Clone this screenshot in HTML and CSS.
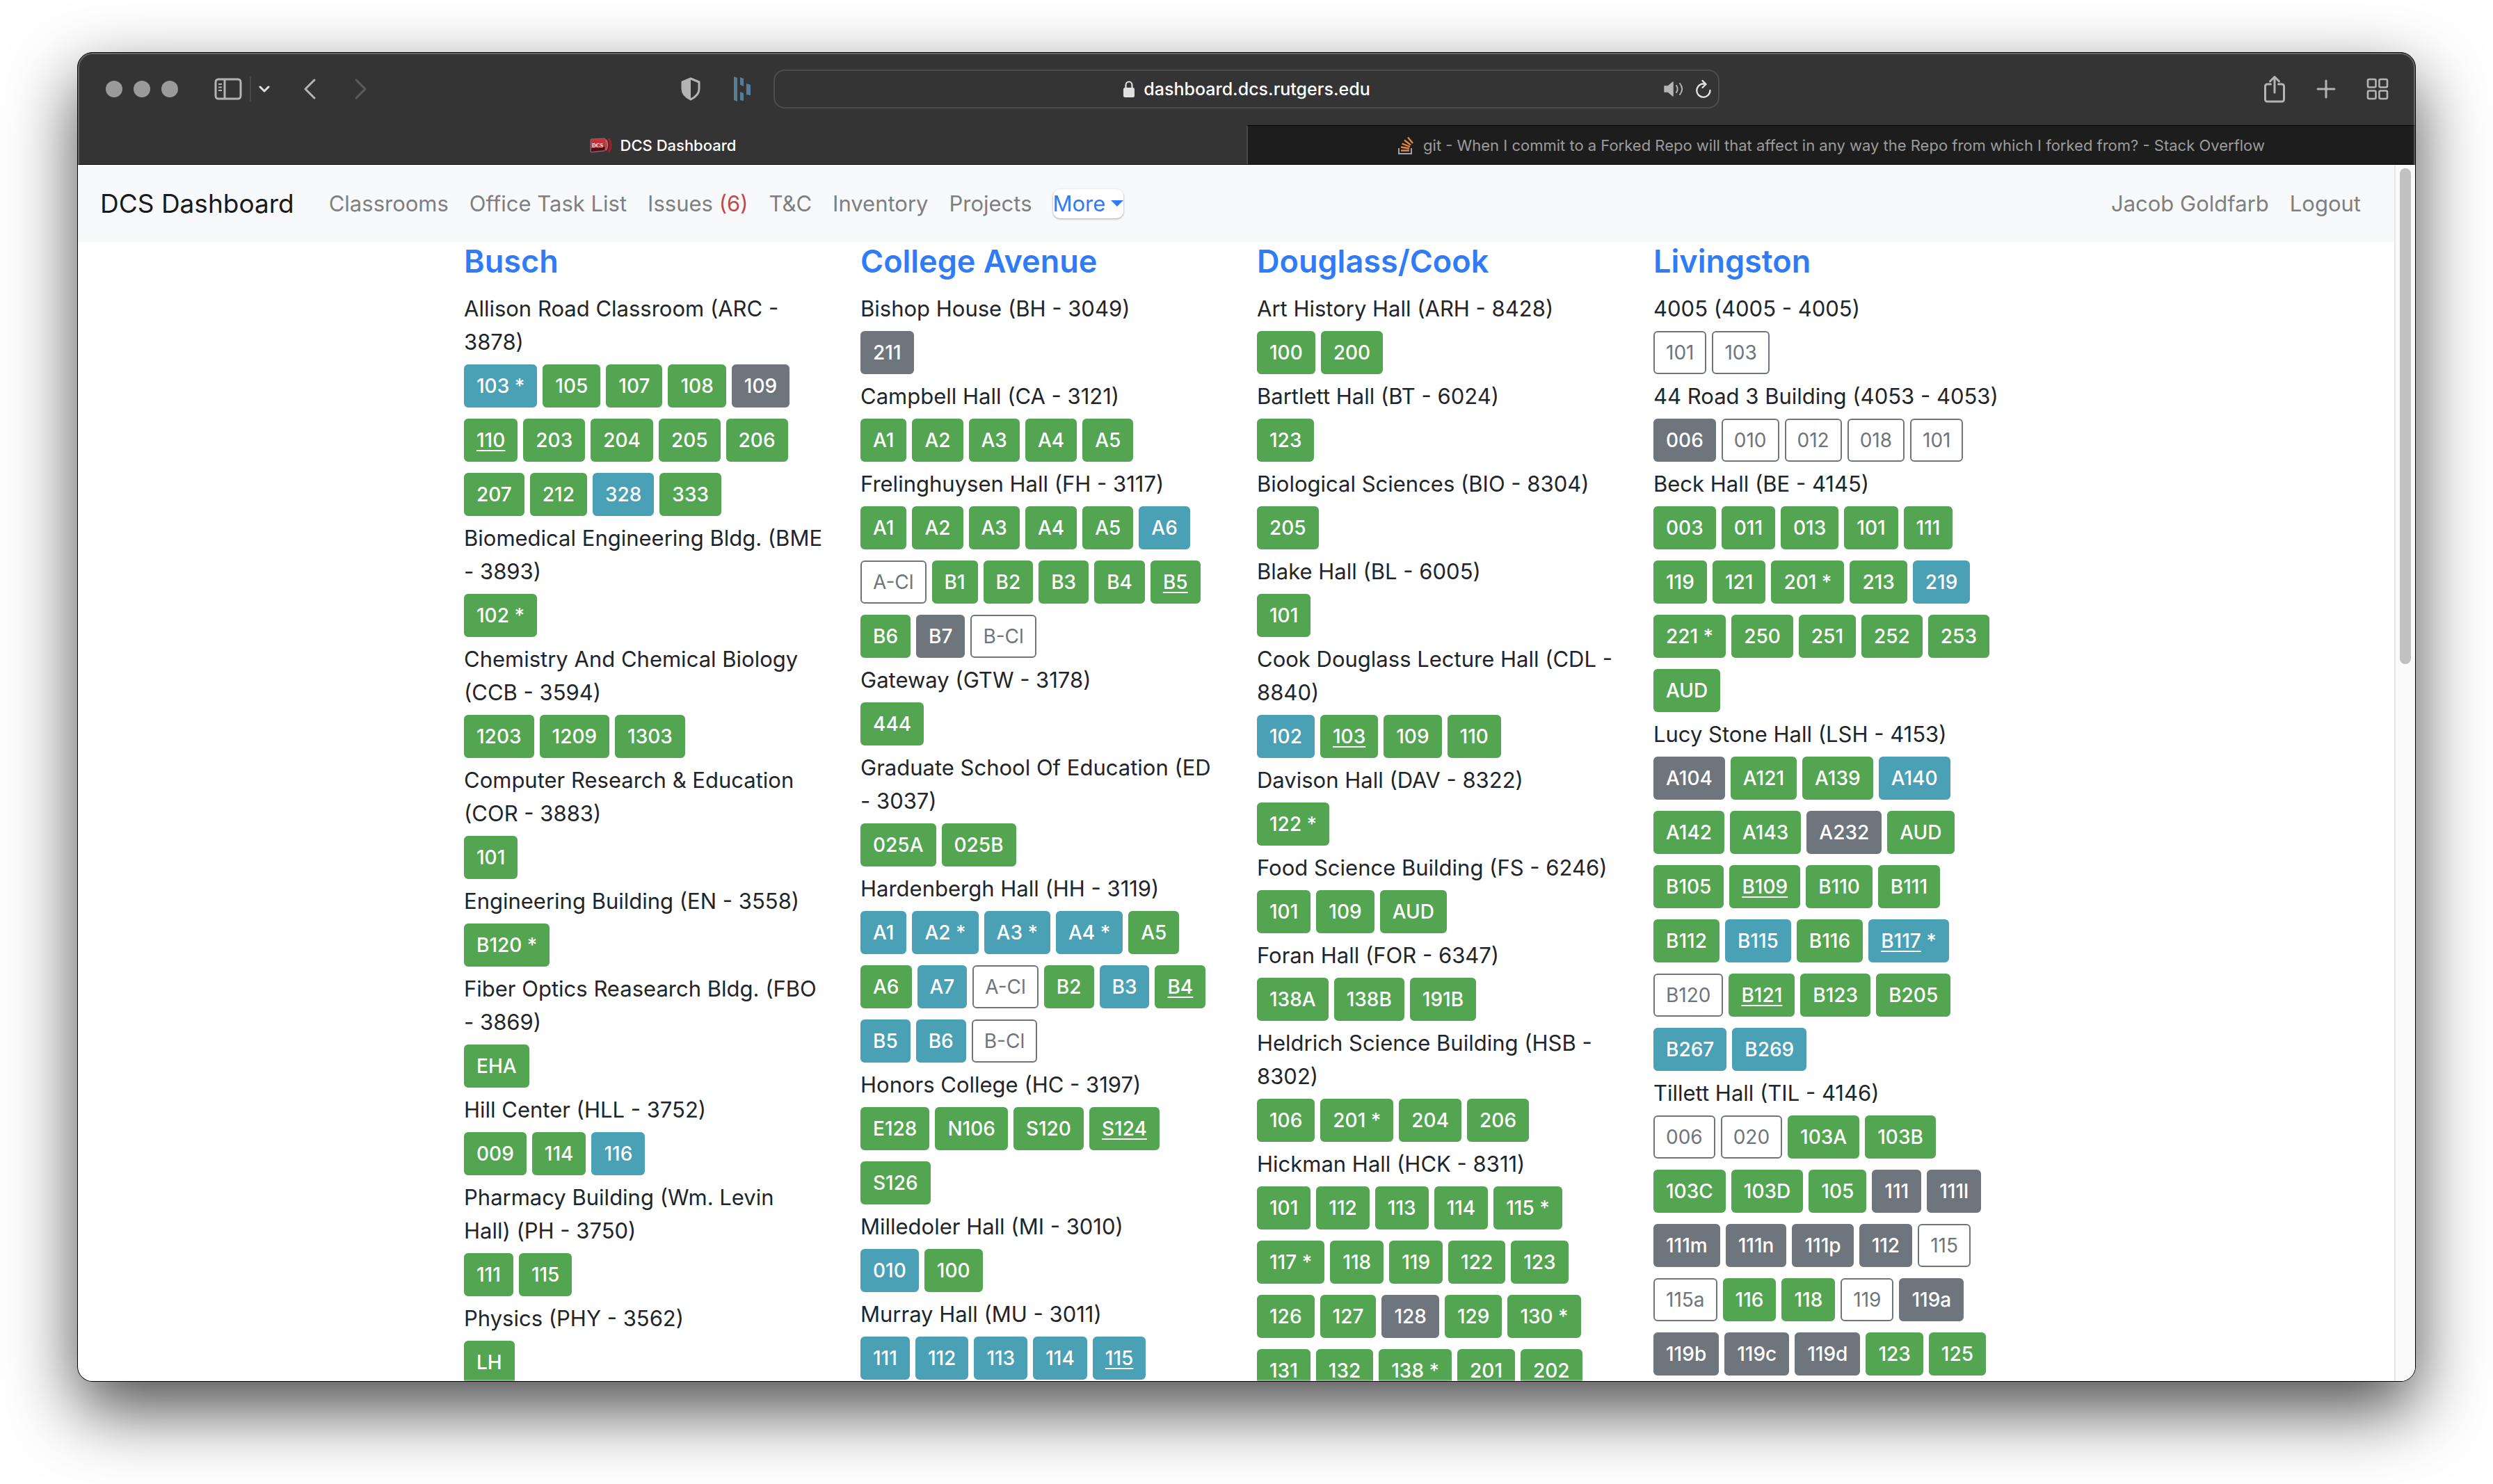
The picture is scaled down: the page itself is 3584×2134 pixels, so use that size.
FILE: index.html
```html
<!DOCTYPE html>
<html lang="en">
<head>
<meta charset="utf-8">
<title>DCS Dashboard</title>
<link rel="stylesheet" href="styles.css">
</head>
<body>
<div class="window">
  <header class="toolbar">
    <div class="tools tools-left">
      <div class="lights"><i></i><i></i><i></i></div>
      <div class="side-tools">
        <button class="tool" aria-label="Sidebar"><svg width="40" height="32" viewBox="0 0 40 32" fill="none" stroke="currentColor"><rect x="2" y="2" width="36" height="28" rx="4" stroke-width="3"/><path d="M15 2v28" stroke-width="3"/><path d="M6 9h5M6 13.500h5M6 18h5" stroke-width="2"/></svg></button>
        <span class="divider"></span>
        <button class="tool bright" aria-label="Tab groups"><svg width="16" height="12" viewBox="0 0 16 12" fill="none" stroke="currentColor" stroke-width="3" stroke-linecap="round" stroke-linejoin="round"><path d="M2 3l6 6 6-6"/></svg></button>
      </div>
      <div class="history">
        <button class="tool" aria-label="Back"><svg width="20" height="32" viewBox="0 0 20 32" fill="none" stroke="currentColor" stroke-width="3" stroke-linecap="round" stroke-linejoin="round"><path d="M16 3L3 16l13 13"/></svg></button>
        <button class="tool dim" aria-label="Forward"><svg width="20" height="32" viewBox="0 0 20 32" fill="none" stroke="currentColor" stroke-width="3" stroke-linecap="round" stroke-linejoin="round"><path d="M4 3l13 13L4 29"/></svg></button>
      </div>
      <div class="extensions">
        <button class="tool" aria-label="Privacy report"><svg width="30" height="34" viewBox="0 0 30 34"><path d="M15 2l12 5v10c0 7-6 12-12 15C9 29 3 24 3 17V7z" fill="none" stroke="currentColor" stroke-width="3" stroke-linejoin="round"/><path d="M15 2v30C9 29 3 24 3 17V7z" fill="currentColor"/></svg></button>
        <button class="tool blue" aria-label="Extension"><svg width="26" height="36" viewBox="0 0 26 36" fill="currentColor"><path d="M1 0l5 2v34l-5-2zM10 1l5 2v11l-5-2zM10 22l5 2v11l-5-1zM19 10l6 2v15l-6-1z"/></svg></button>
      </div>
    </div>
    <div class="address">
      <label class="address-text">
        <svg width="18" height="24" viewBox="0 0 18 24"><path d="M4.500 11V6.500a4.500 5 0 0 1 9 0V11" fill="none" stroke="currentColor" stroke-width="2.200"/><rect x="1" y="10" width="16" height="14" rx="2.500" fill="currentColor"/></svg>
        <input type="text" value="dashboard.dcs.rutgers.edu" aria-label="Address">
      </label>
      <div class="address-tools">
        <button class="tool" aria-label="Mute"><svg width="28" height="24" viewBox="0 0 28 24"><path d="M1 8h5l7-6v20l-7-6H1z" fill="currentColor" stroke="currentColor" stroke-width="1.500" stroke-linejoin="round"/><path d="M18 7c2 3 2 7 0 10M23 4c4 5 4 11 0 16" fill="none" stroke="currentColor" stroke-width="2" stroke-linecap="round"/></svg></button>
        <button class="tool bright" aria-label="Reload"><svg width="22" height="28" viewBox="0 0 22 28" fill="none" stroke="currentColor" stroke-width="2.400" stroke-linecap="round" stroke-linejoin="round"><path d="M20.500 16A9.600 9.600 0 1 1 14 7M9.500 2l5 5-5 5"/></svg></button>
      </div>
    </div>
    <div class="tools tools-right">
      <button class="tool" aria-label="Share"><svg width="32" height="40" viewBox="0 0 32 40" fill="none" stroke="currentColor" stroke-width="3" stroke-linecap="round" stroke-linejoin="round"><path d="M10.500 13H5.500a3 3 0 0 0-3 3v19a3 3 0 0 0 3 3h21a3 3 0 0 0 3-3V16a3 3 0 0 0-3-3h-5M16 25V3M9.500 9L16 2.500 22.500 9"/></svg></button>
      <button class="tool" aria-label="New tab"><svg width="28" height="28" viewBox="0 0 28 28" fill="none" stroke="currentColor" stroke-width="3" stroke-linecap="round"><path d="M14 2v24M2 14h24"/></svg></button>
      <button class="tool" aria-label="Tab overview"><svg width="32" height="32" viewBox="0 0 32 32" fill="none" stroke="currentColor" stroke-width="2.600"><rect x="2" y="2" width="11.500" height="11.500" rx="2"/><rect x="18.500" y="2" width="11.500" height="11.500" rx="2"/><rect x="2" y="18.500" width="11.500" height="11.500" rx="2"/><rect x="18.500" y="18.500" width="11.500" height="11.500" rx="2"/></svg></button>
    </div>
  </header>

  <div class="tabs">
    <button class="tab active"><svg width="32" height="22" viewBox="0 0 32 22"><path d="M1 3q0-1 1-1l19-1q2 0 2 9t-2 9L2 21q-1 0-1-1z" fill="#c9303a" stroke="#777"/><path d="M2 15l20-2-1 5-19 2z" fill="#4d1014"/><path d="M23 3c3 5 3 10 0 15" stroke="#e0505a" stroke-width="2.500" fill="none"/><path d="M27 1c4 6 4 13 0 20" stroke="#a3202a" stroke-width="3" fill="none"/><text x="3" y="14" font-family="Liberation Serif, serif" font-size="8" font-weight="700" fill="#fff">DCS</text></svg>DCS Dashboard</button>
    <button class="tab"><svg width="24" height="26" viewBox="0 0 24 26" fill="none"><path d="M1 17v8h18v-8" stroke="#9da3a8" stroke-width="2"/><path d="M4 20.500h12M4 15.500l12 2M5.500 10.500L17 15M9 5.500l9 7M14 1.500l7 8.500" stroke="#e5873c" stroke-width="2.400"/></svg>git - When I commit to a Forked Repo will that affect in any way the Repo from which I forked from? - Stack Overflow</button>
  </div>

  <div class="viewport">
    <div class="page">
      <nav class="navbar">
        <a class="brand" href="#">DCS Dashboard</a>
        <a href="#">Classrooms</a>
        <a href="#">Office Task List</a>
        <a href="#">Issues <span class="count">(6)</span></a>
        <a href="#">T&amp;C</a>
        <a href="#">Inventory</a>
        <a href="#">Projects</a>
        <button class="more">More<span class="caret"></span></button>
        <a class="user" href="#">Jacob Goldfarb</a>
        <a href="#">Logout</a>
      </nav>
      <main class="campuses">
        <section class="campus">
          <h2><a href="#">Busch</a></h2>
          <h3>Allison Road Classroom (ARC - 3878)</h3>
          <div class="rooms"><a href="#" class="info">103 *</a><a href="#">105</a><a href="#">107</a><a href="#">108</a><a href="#" class="off">109</a><a href="#"><u>110</u></a><a href="#">203</a><a href="#">204</a><a href="#">205</a><a href="#">206</a><a href="#">207</a><a href="#">212</a><a href="#" class="info">328</a><a href="#">333</a></div>
          <h3>Biomedical Engineering Bldg. (BME - 3893)</h3>
          <div class="rooms"><a href="#">102 *</a></div>
          <h3>Chemistry And Chemical Biology (CCB - 3594)</h3>
          <div class="rooms"><a href="#">1203</a><a href="#">1209</a><a href="#">1303</a></div>
          <h3>Computer Research &amp; Education (COR - 3883)</h3>
          <div class="rooms"><a href="#">101</a></div>
          <h3>Engineering Building (EN - 3558)</h3>
          <div class="rooms"><a href="#">B120 *</a></div>
          <h3>Fiber Optics Reasearch Bldg. (FBO - 3869)</h3>
          <div class="rooms"><a href="#">EHA</a></div>
          <h3>Hill Center (HLL - 3752)</h3>
          <div class="rooms"><a href="#">009</a><a href="#">114</a><a href="#" class="info">116</a></div>
          <h3>Pharmacy Building (Wm. Levin Hall) (PH - 3750)</h3>
          <div class="rooms"><a href="#">111</a><a href="#">115</a></div>
          <h3>Physics (PHY - 3562)</h3>
          <div class="rooms"><a href="#">LH</a></div>
        </section>

        <section class="campus">
          <h2><a href="#">College Avenue</a></h2>
          <h3>Bishop House (BH - 3049)</h3>
          <div class="rooms"><a href="#" class="off">211</a></div>
          <h3>Campbell Hall (CA - 3121)</h3>
          <div class="rooms"><a href="#">A1</a><a href="#">A2</a><a href="#">A3</a><a href="#">A4</a><a href="#">A5</a></div>
          <h3>Frelinghuysen Hall (FH - 3117)</h3>
          <div class="rooms"><a href="#">A1</a><a href="#">A2</a><a href="#">A3</a><a href="#">A4</a><a href="#">A5</a><a href="#" class="info">A6</a><a href="#" class="none">A-Cl</a><a href="#">B1</a><a href="#">B2</a><a href="#">B3</a><a href="#">B4</a><a href="#"><u>B5</u></a><a href="#">B6</a><a href="#" class="off">B7</a><a href="#" class="none">B-Cl</a></div>
          <h3>Gateway (GTW - 3178)</h3>
          <div class="rooms"><a href="#">444</a></div>
          <h3>Graduate School Of Education (ED - 3037)</h3>
          <div class="rooms"><a href="#">025A</a><a href="#">025B</a></div>
          <h3>Hardenbergh Hall (HH - 3119)</h3>
          <div class="rooms"><a href="#" class="info">A1</a><a href="#" class="info">A2 *</a><a href="#" class="info">A3 *</a><a href="#" class="info">A4 *</a><a href="#">A5</a><a href="#">A6</a><a href="#" class="info">A7</a><a href="#" class="none">A-Cl</a><a href="#">B2</a><a href="#" class="info">B3</a><a href="#"><u>B4</u></a><a href="#" class="info">B5</a><a href="#" class="info">B6</a><a href="#" class="none">B-Cl</a></div>
          <h3>Honors College (HC - 3197)</h3>
          <div class="rooms"><a href="#">E128</a><a href="#">N106</a><a href="#">S120</a><a href="#"><u>S124</u></a><a href="#">S126</a></div>
          <h3>Milledoler Hall (MI - 3010)</h3>
          <div class="rooms"><a href="#" class="info">010</a><a href="#">100</a></div>
          <h3>Murray Hall (MU - 3011)</h3>
          <div class="rooms"><a href="#" class="info">111</a><a href="#" class="info">112</a><a href="#" class="info">113</a><a href="#" class="info">114</a><a href="#" class="info"><u>115</u></a></div>
        </section>

        <section class="campus">
          <h2><a href="#">Douglass/Cook</a></h2>
          <h3>Art History Hall (ARH - 8428)</h3>
          <div class="rooms"><a href="#">100</a><a href="#">200</a></div>
          <h3>Bartlett Hall (BT - 6024)</h3>
          <div class="rooms"><a href="#">123</a></div>
          <h3>Biological Sciences (BIO - 8304)</h3>
          <div class="rooms"><a href="#">205</a></div>
          <h3>Blake Hall (BL - 6005)</h3>
          <div class="rooms"><a href="#">101</a></div>
          <h3>Cook Douglass Lecture Hall (CDL - 8840)</h3>
          <div class="rooms"><a href="#" class="info">102</a><a href="#"><u>103</u></a><a href="#">109</a><a href="#">110</a></div>
          <h3>Davison Hall (DAV - 8322)</h3>
          <div class="rooms"><a href="#">122 *</a></div>
          <h3>Food Science Building (FS - 6246)</h3>
          <div class="rooms"><a href="#">101</a><a href="#">109</a><a href="#">AUD</a></div>
          <h3>Foran Hall (FOR - 6347)</h3>
          <div class="rooms"><a href="#">138A</a><a href="#">138B</a><a href="#">191B</a></div>
          <h3>Heldrich Science Building (HSB - 8302)</h3>
          <div class="rooms"><a href="#">106</a><a href="#">201 *</a><a href="#">204</a><a href="#">206</a></div>
          <h3>Hickman Hall (HCK - 8311)</h3>
          <div class="rooms"><a href="#">101</a><a href="#">112</a><a href="#">113</a><a href="#">114</a><a href="#">115 *</a><a href="#">117 *</a><a href="#">118</a><a href="#">119</a><a href="#">122</a><a href="#">123</a><a href="#">126</a><a href="#">127</a><a href="#" class="off">128</a><a href="#">129</a><a href="#">130 *</a><a href="#">131</a><a href="#">132</a><a href="#">138 *</a><a href="#">201</a><a href="#">202</a></div>
        </section>

        <section class="campus">
          <h2><a href="#">Livingston</a></h2>
          <h3>4005 (4005 - 4005)</h3>
          <div class="rooms"><a href="#" class="none">101</a><a href="#" class="none">103</a></div>
          <h3>44 Road 3 Building (4053 - 4053)</h3>
          <div class="rooms"><a href="#" class="off">006</a><a href="#" class="none">010</a><a href="#" class="none">012</a><a href="#" class="none">018</a><a href="#" class="none">101</a></div>
          <h3>Beck Hall (BE - 4145)</h3>
          <div class="rooms"><a href="#">003</a><a href="#">011</a><a href="#">013</a><a href="#">101</a><a href="#">111</a><a href="#">119</a><a href="#">121</a><a href="#">201 *</a><a href="#">213</a><a href="#" class="info">219</a><a href="#">221 *</a><a href="#">250</a><a href="#">251</a><a href="#">252</a><a href="#">253</a><a href="#">AUD</a></div>
          <h3>Lucy Stone Hall (LSH - 4153)</h3>
          <div class="rooms"><a href="#" class="off">A104</a><a href="#">A121</a><a href="#">A139</a><a href="#" class="info">A140</a><a href="#">A142</a><a href="#">A143</a><a href="#" class="off">A232</a><a href="#">AUD</a><a href="#">B105</a><a href="#"><u>B109</u></a><a href="#">B110</a><a href="#">B111</a><a href="#">B112</a><a href="#" class="info">B115</a><a href="#">B116</a><a href="#" class="info"><u>B117</u> *</a><a href="#" class="none">B120</a><a href="#"><u>B121</u></a><a href="#">B123</a><a href="#">B205</a><a href="#" class="info">B267</a><a href="#" class="info">B269</a></div>
          <h3>Tillett Hall (TIL - 4146)</h3>
          <div class="rooms"><a href="#" class="none">006</a><a href="#" class="none">020</a><a href="#">103A</a><a href="#">103B</a><a href="#">103C</a><a href="#">103D</a><a href="#">105</a><a href="#" class="off">111</a><a href="#" class="off">111l</a><a href="#" class="off">111m</a><a href="#" class="off">111n</a><a href="#" class="off">111p</a><a href="#" class="off">112</a><a href="#" class="none">115</a><a href="#" class="none">115a</a><a href="#">116</a><a href="#">118</a><a href="#" class="none">119</a><a href="#" class="off">119a</a><a href="#" class="off">119b</a><a href="#" class="off">119c</a><a href="#" class="off">119d</a><a href="#">123</a><a href="#">125</a></div>
        </section>
      </main>
    </div>
    <div class="scrollbar"><div class="thumb"></div></div>
  </div>
</div>
</body>
</html>
```
FILE: styles.css
```css
* { box-sizing: border-box; }

body {
  margin: 0;
  height: 100vh;
  padding: 75px 111px 147px;
  background: #fff;
  font-family: Inter, "Liberation Sans", sans-serif;
  font-size: 31px;
  line-height: 48px;
  color: #212529;
  overflow: hidden;
}

button {
  margin: 0;
  padding: 0;
  border: 0;
  background: none;
  font: inherit;
  color: inherit;
}

a { color: inherit; text-decoration: none; }
svg { display: block; flex: none; }

/* Browser window */
.window {
  position: relative;
  display: flex;
  flex-direction: column;
  height: 100%;
  border: 1px solid #000;
  border-radius: 22px;
  background: #343434;
  overflow: hidden;
  box-shadow: 0 40px 100px rgba(0, 0, 0, .7);
}

.window::after {
  content: "";
  position: absolute;
  inset: 0;
  border-radius: 21px;
  box-shadow: inset 0 0 0 2px rgba(255, 255, 255, .25);
  pointer-events: none;
}

.toolbar {
  flex: none;
  display: grid;
  grid-template-columns: 1fr minmax(0, 1360px) 1fr;
  align-items: center;
  height: 104px;
}

.tools { display: flex; align-items: center; color: #b4b4b4; }
.tools-left { padding: 0 32px 0 40px; }
.tools-right { justify-content: flex-end; gap: 44px; padding-right: 38px; }
.tool { display: block; }
.bright { color: #e0e0e0; }
.dim { color: #5c5c5c; }
.blue { color: #567d96; }

.lights { display: flex; gap: 16px; margin-right: 52px; }
.lights i { width: 24px; height: 24px; border-radius: 50%; background: #9a9a9a; }
.side-tools { display: flex; align-items: center; gap: 11px; margin-right: 48px; }
.divider { width: 2px; height: 36px; background: #484848; }
.history { display: flex; gap: 52px; }
.extensions { display: flex; align-items: center; gap: 46px; margin-left: auto; }

.address {
  display: grid;
  grid-template-columns: 1fr auto 1fr;
  align-items: center;
  height: 56px;
  border: 2px solid #4c4c4c;
  border-radius: 16px;
  color: #e0e0e0;
}

.address-text { grid-column: 2; display: flex; align-items: center; gap: 12px; }

.address-text input {
  field-sizing: content;
  padding: 0;
  border: 0;
  background: none;
  font: 500 25px/32px Inter, "Liberation Sans", sans-serif;
  color: #fff;
}

.address-tools {
  display: flex;
  align-items: center;
  justify-content: flex-end;
  gap: 18px;
  padding-right: 10px;
}

.address-tools .tool:first-child { color: #b4b4b4; }

.tabs {
  flex: none;
  display: grid;
  grid-template-columns: 1fr 1fr;
  height: 57px;
  border-bottom: 1px solid #000;
}

.tab {
  display: flex;
  align-items: center;
  justify-content: center;
  gap: 12px;
  border-top: 1px solid #000;
  border-left: 2px solid #484848;
  background: #1d1d1d;
  font-size: 22px;
  line-height: 28px;
  color: #9b9b9b;
  white-space: nowrap;
}

.tab.active {
  border-color: transparent;
  background: none;
  font-weight: 500;
  color: #fff;
}

.viewport { flex: 1; display: flex; min-height: 0; background: #fff; }
.page { flex: 1; overflow: hidden; }

.scrollbar {
  width: 30px;
  padding: 5px 6px;
  border-left: 2px solid #e7e7e7;
  background: #fafafa;
}

.thumb { width: 16px; height: 41%; border-radius: 8px; background: #c1c1c1; }

/* Site navigation */
.navbar {
  display: flex;
  align-items: center;
  gap: 30px;
  height: 111px;
  padding: 0 48px 0 32px;
  background: #f8f9fa;
  color: #7f7f7f;
  white-space: nowrap;
}

.brand { margin-right: 20px; font-size: 37px; color: #191a1a; }
.count { color: #cb444a; }

.more {
  display: flex;
  align-items: center;
  gap: 8px;
  height: 42px;
  border-radius: 10px;
  background: #fff;
  box-shadow: 0 1px 3px rgba(0, 0, 0, .35);
  color: #2f7cf6;
}

.caret {
  border: 9px solid transparent;
  border-top-color: currentColor;
  border-bottom: 0;
}

.user { margin-left: auto; }

/* Campus columns */
.campuses {
  display: grid;
  grid-template-columns: repeat(4, minmax(0, 1fr));
  gap: 60px;
  max-width: 2280px;
  margin: 0 auto;
  padding: 0 30px;
}

.campus h2 {
  margin: 0 0 16px;
  font-size: 45px;
  font-weight: 600;
  line-height: 56px;
  color: #2f7cf6;
}

.campus h3 { margin: 0 -8px 0 0; font-size: inherit; font-weight: 400; }

.rooms { display: flex; flex-wrap: wrap; gap: 16px 8px; padding: 8px 8px 8px 0; }

.rooms a {
  padding: 8px 16px;
  border: 2px solid #53a551;
  border-radius: 6px;
  background: #53a551;
  font-size: 28px;
  font-weight: 500;
  line-height: 42px;
  color: #fff;
}

.rooms u { text-underline-offset: 4px; }
.rooms .info { border-color: #4aa0b5; background: #4aa0b5; }
.rooms .off { border-color: #6e757c; background: #6e757c; }

.rooms .none {
  border-color: #6e757c;
  background: none;
  font-weight: 400;
  color: #6e757c;
}
```
